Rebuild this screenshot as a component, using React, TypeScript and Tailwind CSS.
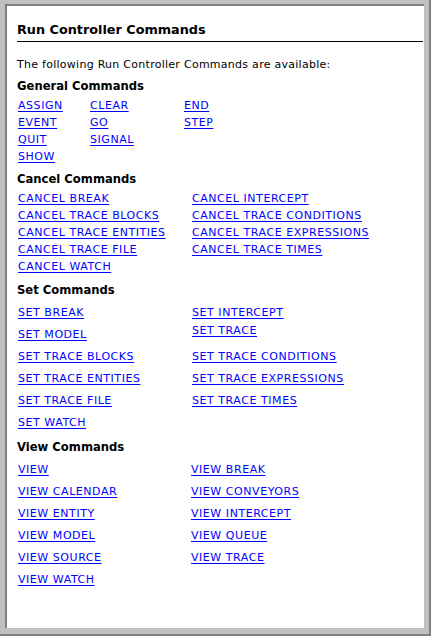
const general = [
  ['ASSIGN', 'CLEAR', 'END'],
  ['EVENT', 'GO', 'STEP'],
  ['QUIT', 'SIGNAL', ''],
  ['SHOW', '', ''],
]

const cancel = [
  ['CANCEL BREAK', 'CANCEL INTERCEPT'],
  ['CANCEL TRACE BLOCKS', 'CANCEL TRACE CONDITIONS'],
  ['CANCEL TRACE ENTITIES', 'CANCEL TRACE EXPRESSIONS'],
  ['CANCEL TRACE FILE', 'CANCEL TRACE TIMES'],
  ['CANCEL WATCH', ''],
]

const setCmds = [
  ['SET BREAK', 'SET INTERCEPT'],
  ['SET MODEL', 'SET TRACE'],
  ['SET TRACE BLOCKS', 'SET TRACE CONDITIONS'],
  ['SET TRACE ENTITIES', 'SET TRACE EXPRESSIONS'],
  ['SET TRACE FILE', 'SET TRACE TIMES'],
  ['SET WATCH', ''],
]

const view = [
  ['VIEW', 'VIEW BREAK'],
  ['VIEW CALENDAR', 'VIEW CONVEYORS'],
  ['VIEW ENTITY', 'VIEW INTERCEPT'],
  ['VIEW MODEL', 'VIEW QUEUE'],
  ['VIEW SOURCE', 'VIEW TRACE'],
  ['VIEW WATCH', ''],
]

function Cmd({ label, className = '' }: { label: string; className?: string }) {
  if (!label) return <span />
  return (
    <a
      href="#"
      className={`justify-self-start pl-[1px] text-[#0000ff] underline underline-offset-[2px] whitespace-nowrap tracking-[0.55px] ${className}`}
    >
      {label}
    </a>
  )
}

function Heading({ children, className = '' }: { children: string; className?: string }) {
  return <h3 className={`text-[11.6px] font-bold leading-[17px] text-black ${className}`}>{children}</h3>
}

export default function App() {
  return (
    <div
      className="w-[431px] h-[636px] bg-[#c0c0c0] border-r-2 border-b-2 border-[#808080] pl-[5px] pt-[4px] pr-[5px] pb-[6px]"
      style={{ fontFamily: '"DejaVu Sans", Verdana, sans-serif' }}
    >
      <div className="h-full bg-white border-l-2 border-t-2 border-[#808080] pl-[10px] pt-[16px] text-[11px] text-black">
        {/* Title */}
        <div className="mr-[1px] border-b border-black pb-[3px]">
          <h1 className="text-[12.8px] font-bold leading-[16px]">Run Controller Commands</h1>
        </div>

        <p className="mt-[14px] leading-[17px] tracking-[0.27px]">The following Run Controller Commands are available:</p>

        {/* General */}
        <Heading className="mt-[5px]">General Commands</Heading>
        <div className="mt-[2px] grid grid-cols-[72px_94px_auto] leading-[17px]">
          {general.flat().map((c, i) => (
            <Cmd key={i} label={c} />
          ))}
        </div>

        {/* Cancel */}
        <Heading className="mt-[6px]">Cancel Commands</Heading>
        <div className="mt-[2px] grid grid-cols-[174px_auto] leading-[17px]">
          {cancel.flat().map((c, i) => (
            <Cmd key={i} label={c} />
          ))}
        </div>

        {/* Set */}
        <Heading className="mt-[7px]">Set Commands</Heading>
        <div className="mt-[3px] grid grid-cols-[174px_auto] leading-[22px] items-start">
          {setCmds.flat().map((c, i) => (
            <Cmd key={i} label={c} className={c === 'SET TRACE' ? 'leading-[14px]' : ''} />
          ))}
        </div>

        {/* View */}
        <Heading className="mt-[5px]">View Commands</Heading>
        <div className="mt-[3px] grid grid-cols-[173px_auto] leading-[22px]">
          {view.flat().map((c, i) => (
            <Cmd key={i} label={c} />
          ))}
        </div>
      </div>
    </div>
  )
}
